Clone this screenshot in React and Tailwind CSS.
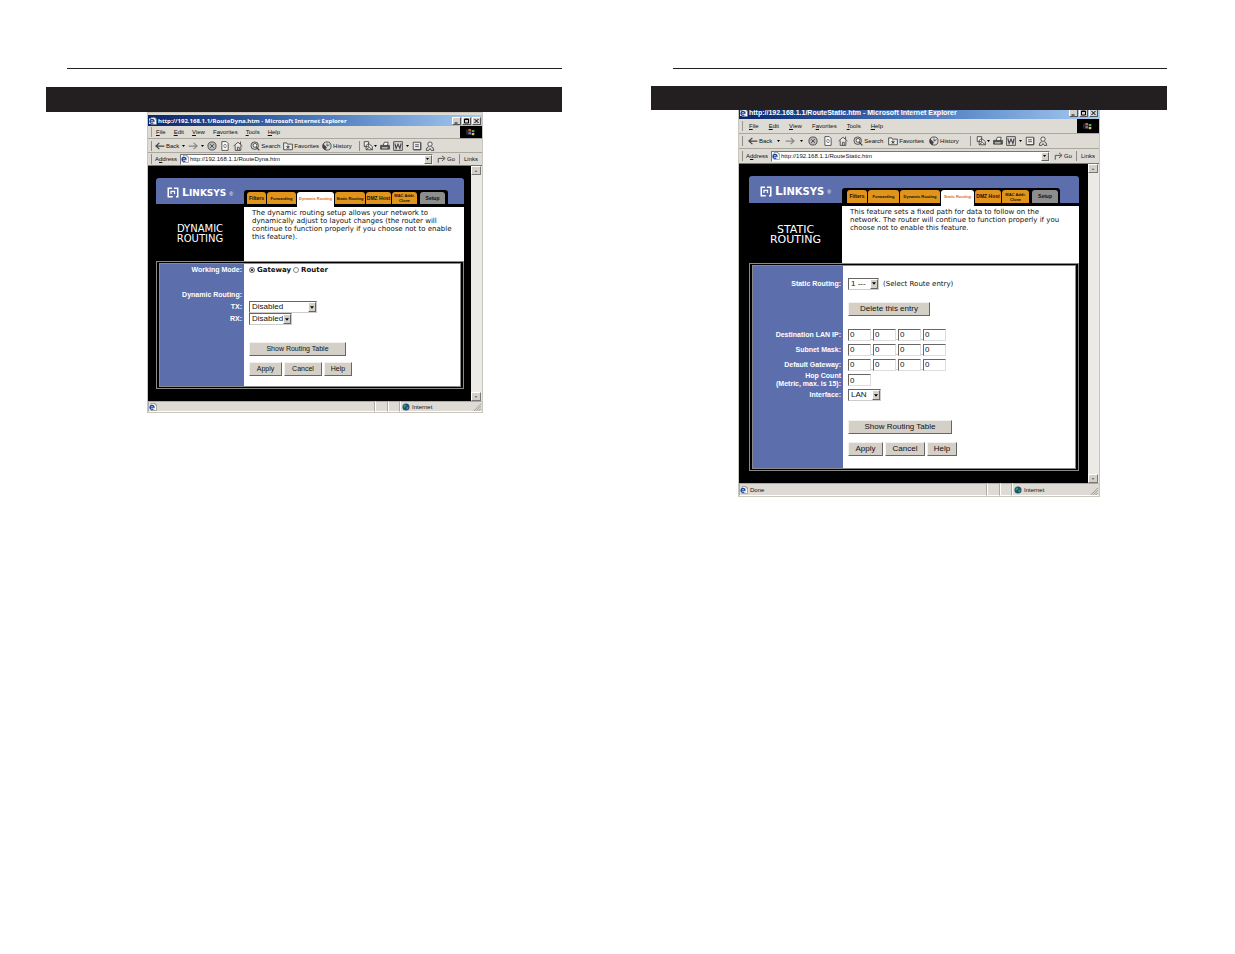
import React from 'react';
import clsx from 'clsx';

// small document icon with the blue "e"
const PageIcon = ({ className }) => (
  <svg viewBox="0 0 16 16" className={clsx('shrink-0', className)} aria-hidden="true">
    <path d="M4 1h8l3 3v11H4z" fill="#fff" stroke="#666" />
    <path d="M12 1v3h3" fill="none" stroke="#666" />
    <rect x="0" y="3" width="12" height="11" fill="#dfe8f8" />
    <path d="M2 8.500h8a4 4 0 1 0-1.500 3.200" fill="none" stroke="#1c3f94" strokeWidth="2.400" />
  </svg>
);

const WindowsLogo = () => (
  <svg viewBox="0 0 14 12" className="h-2 w-[10px]" aria-hidden="true">
    <path d="M3 2q2-1.500 4 0v3.500q-2-1.200-4 0z" fill="#d8603c" />
    <path d="M8 2.500q2 1 4 0V6q-2 1-4 0z" fill="#6f9a5b" />
    <path d="M3 6.500q2-1.200 4 0V10q-2-1.200-4 0z" fill="#5b83c4" />
    <path d="M8 7q2 1 4 0v3.500q-2 1-4 0z" fill="#d9c06a" />
    <path d="M0 3h2M0 5h2M0 7h2M0 9h2" stroke="#8a6a6a" strokeWidth="1" />
  </svg>
);

const Icon = ({ children, className }) => (
  <svg
    viewBox="0 0 16 16"
    className={clsx('h-[10px] w-[10px] shrink-0', className)}
    fill="none"
    stroke="#444"
    strokeWidth="1.400"
    aria-hidden="true"
  >
    {children}
  </svg>
);

const Caret = () => (
  <svg viewBox="0 0 6 4" className="h-[2px] w-[3px] shrink-0" aria-hidden="true">
    <path d="M0 0h6L3 4z" fill="#000" />
  </svg>
);

const ToolButton = ({ label, text, children }) => (
  <button type="button" aria-label={label} className="flex items-center gap-px">
    {children}
    {text && <span>{text}</span>}
  </button>
);

const Divider = () => <span className="h-[10px] w-px shrink-0 bg-[#8c8a86]" />;

const TitleBar = ({ title, large }) => (
  <div
    className={clsx(
      'flex items-center gap-px bg-linear-to-r from-[#0a246a] via-[#4a78bd] to-[#a6caf0] px-px',
      large ? 'h-3' : 'h-[11px]'
    )}
  >
    <PageIcon className="h-2 w-2" />
    <h2
      className={clsx(
        'flex-1 truncate leading-[8px] font-bold text-white',
        large ? 'text-[7px]' : 'font-["Noto_Sans",sans-serif] text-[6px]'
      )}
    >
      {title}
    </h2>
    {['Minimize', 'Maximize', 'Close'].map((name) => (
      <button
        key={name}
        type="button"
        aria-label={name}
        className="h-2 w-[9px] border border-t-white border-r-[#555] border-b-[#555] border-l-white bg-[#d4d0c8]"
      >
        <svg viewBox="0 0 14 12" className="h-full w-full" fill="none" stroke="#000" strokeWidth="2">
          {name === 'Minimize' && <path d="M3 10h6" />}
          {name === 'Maximize' && <path d="M3 2h8v8H3zM3 3h8" />}
          {name === 'Close' && <path d="M3 2l8 8M11 2l-8 8" />}
        </svg>
      </button>
    ))}
  </div>
);

const MenuBar = ({ large }) => (
  <div className={clsx('flex items-stretch border-b border-[#aaa79f]', large ? 'h-[15px]' : 'h-[13px]')}>
    <div className={clsx('flex flex-1 items-center pl-[3px]', large ? 'gap-[10px]' : 'gap-2')}>
      <span className="-mr-1 h-[10px] w-px bg-[#999]" />
      {[
        ['', 'F', 'ile'],
        ['', 'E', 'dit'],
        ['', 'V', 'iew'],
        ['F', 'a', 'vorites'],
        ['', 'T', 'ools'],
        ['', 'H', 'elp'],
      ].map(([before, key, after]) => (
        <button key={after} type="button">
          {before}
          <u>{key}</u>
          {after}
        </button>
      ))}
    </div>
    <div className="flex w-[22px] items-center justify-center bg-black">
      <WindowsLogo />
    </div>
  </div>
);

const ToolBar = ({ large }) => (
  <div
    className={clsx(
      'flex items-center border-b border-[#aaa79f] pl-[3px]',
      large ? 'h-[15px] gap-[5px]' : 'h-[14px] gap-[3px]'
    )}
  >
    <Divider />
    <ToolButton text="Back">
      <Icon className="w-2">
        <path d="M15 8H2M7 3L1.500 8 7 13" strokeWidth="2" />
      </Icon>
    </ToolButton>
    <Caret />
    <ToolButton label="Forward">
      <Icon className="w-2">
        <path d="M1 8h13M9 3l5.500 5L9 13" stroke="#888" strokeWidth="2" />
      </Icon>
    </ToolButton>
    <Caret />
    <ToolButton label="Stop">
      <Icon>
        <circle cx="8" cy="8" r="6.500" fill="#bbb" />
        <path d="M5 5l6 6M11 5l-6 6" />
      </Icon>
    </ToolButton>
    <ToolButton label="Refresh">
      <Icon>
        <path d="M3 1h7l3 3v11H3z" fill="#fff" />
        <path d="M5.500 7q2-3 5 0M10.500 9q-2 3-5 0" />
      </Icon>
    </ToolButton>
    <ToolButton label="Home">
      <Icon>
        <path d="M1 8l7-6 7 6M3.500 7v8h9V7" fill="#eee" />
        <path d="M7 15v-5h3v5M12 5V1" />
      </Icon>
    </ToolButton>
    {!large && <span className="w-px" />}
    <ToolButton text="Search">
      <Icon>
        <circle cx="7.500" cy="7.500" r="6" fill="#ccc" />
        <circle cx="8" cy="7" r="3" fill="#fff" />
        <path d="M10 10l5 5" strokeWidth="2" />
      </Icon>
    </ToolButton>
    <ToolButton text="Favorites">
      <Icon>
        <path d="M1 3h5l1 2h8v9H1z" fill="#eee" />
        <path d="M8 6l1 2.500h3L9.500 10l1 3L8 11l-2.500 2 1-3L4 8.500h3z" fill="#555" stroke="none" />
      </Icon>
    </ToolButton>
    <ToolButton text="History">
      <Icon>
        <circle cx="8" cy="8" r="6.500" fill="#ddd" />
        <path d="M8 4v4l4-2" />
        <path d="M2 5a7 7 0 0 0 3 9l2-4z" fill="#444" />
      </Icon>
    </ToolButton>
    <span className="w-px" />
    <Divider />
    <div className="flex items-center gap-[3px]">
      <ToolButton label="Mail">
        <Icon>
          <path d="M2 1h7v8H2zM5 7l4-3 6 5v5H5z" fill="#eee" />
          <path d="M5 14l5-4 5 4" />
        </Icon>
        <Caret />
      </ToolButton>
      <ToolButton label="Print">
        <Icon>
          <path d="M5 7l2-5h6l-1 5" fill="#fff" />
          <path d="M1 7h14v6H1z" fill="#555" />
          <path d="M3 11h9" stroke="#fff" />
        </Icon>
      </ToolButton>
      <ToolButton label="Edit with Word">
        <Icon>
          <path d="M1 1h14v14H1z" fill="#ddd" />
          <path d="M3 4l2 8 3-7 3 7 2-8" strokeWidth="1.800" />
        </Icon>
      </ToolButton>
      <Caret />
      <ToolButton label="Discuss">
        <Icon>
          <path d="M2 2h12v12H2z" fill="#eee" />
          <path d="M5 6h6M5 9h6M14 3v11H3" />
        </Icon>
      </ToolButton>
      <ToolButton label="Messenger">
        <Icon>
          <circle cx="8" cy="5" r="3.500" fill="#eee" />
          <path d="M2 15q0-5 4-6M14 15q0-5-4-6M2 15h4l2-3 2 3h4" />
        </Icon>
      </ToolButton>
    </div>
  </div>
);

const AddressBar = ({ id, url, large }) => (
  <div className={clsx('flex items-center gap-1 pr-1 pl-[3px]', large ? 'h-[14px]' : 'h-3')}>
    <Divider />
    <label htmlFor={`${id}-address`} className="-mx-px">
      A<u>d</u>dress
    </label>
    <div className="flex h-[11px] flex-1 items-center gap-px border border-t-[#777] border-r-[#eee] border-b-[#eee] border-l-[#777] bg-white">
      <PageIcon className="h-2 w-2" />
      <input id={`${id}-address`} defaultValue={url} className="w-0 flex-1 outline-none" />
      <button
        type="button"
        aria-label="Show addresses"
        className="flex h-[9px] w-2 items-center justify-center border border-t-white border-r-[#666] border-b-[#666] border-l-white bg-[#d4d0c8]"
      >
        <Caret />
      </button>
    </div>
    <button type="button" className="flex items-center">
      <Icon className="w-2">
        <path d="M2 14V7h9M8 3l5 4-5 4" />
      </Icon>
      Go
    </button>
    <Divider />
    <button type="button">Links</button>
  </div>
);

const ScrollBar = () => (
  <div className="flex w-[11px] shrink-0 flex-col justify-between bg-[#eceae6]">
    {['up', 'down'].map((dir) => (
      <button
        key={dir}
        type="button"
        aria-label={`Scroll ${dir}`}
        className="flex h-[9px] w-[10px] items-center justify-center border border-t-white border-r-[#777] border-b-[#777] border-l-white bg-[#d4d0c8]"
      >
        <svg viewBox="0 0 6 4" className="h-[2px] w-1">
          <path d={dir === 'up' ? 'M0 4h6L3 0z' : 'M0 0h6L3 4z'} fill="#777" />
        </svg>
      </button>
    ))}
  </div>
);

const StatusBar = ({ text, large }) => (
  <div className={clsx('flex items-stretch', large ? 'h-[13px]' : 'h-[11px]')}>
    <div className="flex flex-1 items-center gap-[2px] border border-t-[#aaa] border-r-[#aaa] border-b-white border-l-[#aaa]">
      <PageIcon className="h-2 w-2" />
      {text}
    </div>
    <span className="w-[13px] border border-t-[#aaa] border-r-[#aaa] border-b-white border-l-white" />
    <span className="w-3 border border-t-[#aaa] border-r-[#aaa] border-b-white border-l-white" />
    <div
      className={clsx(
        'flex items-center gap-[2px] border border-t-[#aaa] border-r-transparent border-b-white border-l-white pl-px',
        large ? 'w-[87px]' : 'w-[82px]'
      )}
    >
      <svg viewBox="0 0 16 16" className="h-2 w-2" aria-hidden="true">
        <circle cx="8" cy="8" r="7" fill="#1d4f7c" />
        <path d="M4 3l5 1-2 4-4 1zM9 8l4-1-1 5-3 1z" fill="#3c9a5a" />
      </svg>
      <span className="flex-1">Internet</span>
      <svg viewBox="0 0 10 10" className="h-2 w-2 self-end" stroke="#8a8a8a" aria-hidden="true">
        <path d="M1 10l9-9M4 10l6-6M7 10l3-3" />
      </svg>
    </div>
  </div>
);

const Logo = ({ large }) => (
  <div
    className={clsx(
      'flex shrink-0 items-center gap-[3px] pt-[3px] pl-[11px] text-white',
      large ? 'w-[93px]' : 'w-[88px]'
    )}
  >
    <svg viewBox="0 0 24 22" className="h-[11px] w-3 shrink-0" fill="none" stroke="#fff" aria-hidden="true">
      <path d="M10 2.500H2.500v17h9" strokeWidth="3" />
      <path d="M14 2.500h7.500v17H18" strokeWidth="3" />
      <path d="M8 14V8.500h7V14" strokeWidth="2.500" />
    </svg>
    <span
      className={clsx(
        'font-["DejaVu_Sans",sans-serif] leading-[12px] font-bold',
        large ? 'text-[10px]' : 'text-[9px]'
      )}
    >
      <span className={large ? 'text-[12px]' : 'text-[11px]'}>L</span>INKSYS
    </span>
    <span className="self-start pt-1 text-[5px] leading-[6px]">®</span>
  </div>
);

const tabs = [
  { name: 'Filters', width: 'w-[19px]', wide: 'w-5' },
  { name: 'Forwarding', width: 'w-[29px]', wide: 'w-[31px]' },
  { name: 'Dynamic Routing', width: 'w-[37px]', wide: 'w-10' },
  { name: 'Static Routing', width: 'w-[30px]', wide: 'w-[33px]' },
  { name: 'DMZ Host', width: 'w-[25px]', wide: 'w-[26px]' },
  { name: 'MAC Addr. Clone', width: 'w-[25px]', wide: 'w-[27px]' },
  { name: 'Setup', width: 'w-[25px]', wide: 'w-[26px]' },
];

const Tabs = ({ active, large }) => (
  <nav
    className={clsx(
      '-mb-[3px] flex items-stretch gap-px self-end rounded-t-[3px] bg-black pt-[2px]',
      large ? 'pr-[2px] pl-[5px]' : 'pr-[3px] pl-[3px]'
    )}
  >
    {tabs.map(({ name, width, wide }) => (
      <a
        key={name}
        href="#"
        className={clsx(
          'flex items-center justify-center rounded-t-[3px] text-center leading-[5px] font-bold',
          ['Filters', 'DMZ Host', 'Setup'].includes(name) ? 'text-[5px]' : 'text-[4px]',
          large ? wide : width,
          large ? 'h-4' : 'h-[15px]',
          name === 'Setup' && 'ml-[2px]',
          name === active && 'bg-white pb-[3px] text-[#e8641c]',
          name !== active && 'border-b-[3px] border-black',
          name !== active && (name === 'Setup' ? 'bg-[#8d8d8d]' : 'bg-[#e0941c]')
        )}
      >
        {name}
      </a>
    ))}
  </nav>
);

const Row = ({ label, htmlFor, className, children, large }) => (
  <div className={clsx('flex', className)}>
    <label
      htmlFor={htmlFor}
      className={clsx(
        'flex shrink-0 items-center justify-end bg-[#5c6eac] pr-[2px] text-right text-[7px] leading-[8px] font-bold whitespace-pre-line text-white',
        large ? 'w-[90px]' : 'w-[84px]'
      )}
    >
      {label}
    </label>
    <div className='flex items-center gap-[2px] pl-[5px] font-["DejaVu_Sans",sans-serif]'>{children}</div>
  </div>
);

const Select = ({ id, value, className }) => (
  <div className={clsx('relative', className)}>
    <select
      id={id}
      defaultValue={value}
      className='block h-3 w-full appearance-none border border-t-[#666] border-r-[#ccc] border-b-[#ccc] border-l-[#666] bg-white pl-[2px] font-["Liberation_Sans",sans-serif] text-[8px] leading-[10px] outline-none'
    >
      <option>{value}</option>
    </select>
    <span className="pointer-events-none absolute top-px right-px flex h-[10px] w-2 items-center justify-center border border-t-white border-r-[#666] border-b-[#666] border-l-white bg-[#d4d0c8]">
      <svg viewBox="0 0 6 4" className="h-[3px] w-1">
        <path d="M0 0h6L3 4z" />
      </svg>
    </span>
  </div>
);

const PushButton = ({ className, large, children }) => (
  <button
    type="button"
    className={clsx(
      'h-[14px] border border-t-[#f4f2ee] border-r-[#666] border-b-[#666] border-l-[#f4f2ee] bg-[#d4d0c8] font-["Liberation_Sans",sans-serif] leading-[12px]',
      large ? 'text-[8px]' : 'text-[7px]',
      className
    )}
  >
    {children}
  </button>
);

const NumberField = (props) => (
  <input
    defaultValue="0"
    className='h-3 w-[23px] border border-t-[#666] border-r-[#ddd] border-b-[#ddd] border-l-[#666] bg-white pl-px font-["Liberation_Sans",sans-serif] text-[8px] leading-[10px]'
    {...props}
  />
);

const OctetFields = ({ id, label }) => (
  <div className="flex">
    {[1, 2, 3, 4].map((n) => (
      <div key={n} className="flex items-end">
        <NumberField id={n === 1 ? id : undefined} aria-label={`${label} ${n}`} />
        <span className="w-[2px] leading-[6px]">{n < 4 && '.'}</span>
      </div>
    ))}
  </div>
);

const FormButtons = ({ large }) => (
  <>
    <PushButton large={large} className={large ? 'w-[35px]' : 'w-[33px]'}>
      Apply
    </PushButton>
    <PushButton large={large} className={large ? 'w-10' : 'w-[38px]'}>
      Cancel
    </PushButton>
    <PushButton large={large} className={large ? 'w-[30px]' : 'w-7'}>
      Help
    </PushButton>
  </>
);

const DynamicForm = () => (
  <>
    <Row label="Working Mode:" className="h-3">
      {['Gateway', 'Router'].map((mode) => (
        <label key={mode} className="flex items-center gap-[2px] text-[7px] leading-[8px] font-bold">
          <input
            type="radio"
            name="mode"
            defaultChecked={mode === 'Gateway'}
            className="h-[6px] w-[6px] appearance-none rounded-full border border-[#888] bg-white checked:bg-black checked:ring-1 checked:ring-white checked:ring-inset"
          />
          {mode}
        </label>
      ))}
    </Row>
    <Row className="h-[13px]" />
    <Row label="Dynamic Routing:" className="h-3" />
    <Row label="TX:" htmlFor="tx" className="h-3">
      <Select id="tx" value="Disabled" className="w-[68px]" />
    </Row>
    <Row label="RX:" htmlFor="rx" className="h-3">
      <Select id="rx" value="Disabled" className="w-[43px]" />
    </Row>
    <Row className="h-[17px]" />
    <Row className="h-[14px]">
      <PushButton className="w-[97px]">Show Routing Table</PushButton>
    </Row>
    <Row className="h-[6px]" />
    <Row className="h-[14px]">
      <FormButtons />
    </Row>
    <Row className="h-[10px]" />
  </>
);

const StaticForm = () => (
  <>
    <Row large className="h-[11px]" />
    <Row large label="Static Routing:" htmlFor="route" className="h-[13px]">
      <Select id="route" value="1 ---" className="w-[31px]" />
      <span className="pl-[2px] text-[7px] leading-[8px]">(Select Route entry)</span>
    </Row>
    <Row large className="h-3" />
    <Row large className="h-[14px]">
      <PushButton large className="w-[82px]">
        Delete this entry
      </PushButton>
    </Row>
    <Row large className="h-[11px]" />
    <Row large label="Destination LAN IP:" htmlFor="lan-ip" className="h-[15px]">
      <OctetFields id="lan-ip" label="Destination LAN IP" />
    </Row>
    <Row large label="Subnet Mask:" htmlFor="mask" className="h-[15px]">
      <OctetFields id="mask" label="Subnet Mask" />
    </Row>
    <Row large label="Default Gateway:" htmlFor="gateway" className="h-[15px]">
      <OctetFields id="gateway" label="Default Gateway" />
    </Row>
    <Row large label={'Hop Count\n(Metric, max. is 15):'} htmlFor="hops" className="h-4">
      <NumberField id="hops" />
    </Row>
    <Row large label="Interface:" htmlFor="interface" className="h-[14px]">
      <Select id="interface" value="LAN" className="w-[33px]" />
    </Row>
    <Row large className="h-[18px]" />
    <Row large className="h-[14px]">
      <PushButton large className="w-[104px]">
        Show Routing Table
      </PushButton>
    </Row>
    <Row large className="h-2" />
    <Row large className="h-[14px]">
      <FormButtons large />
    </Row>
    <Row large className="h-3" />
  </>
);

const Browser = ({ id, file, status, heading, description, active, large, children }) => (
  <section
    className={clsx(
      'w-full border border-[#c9c6be] bg-[#dedbd4] font-["Liberation_Sans",sans-serif] text-[6px] leading-[8px] text-[#111]',
      large ? '-mt-1 ml-[87px] max-w-[362px]' : 'ml-[101px] max-w-[336px] pt-[2px]'
    )}
  >
    <TitleBar large={large} title={`http://192.168.1.1/${file} - Microsoft Internet Explorer`} />
    <MenuBar large={large} />
    <ToolBar large={large} />
    <AddressBar id={id} large={large} url={`http://192.168.1.1/${file}`} />

    <div className="flex border-t border-[#777]">
      <div
        className={clsx('min-w-0 flex-1 bg-black pt-3 pb-3', large ? 'pr-[9px] pl-[10px]' : 'pr-[7px] pl-2')}
      >
        <header
          className={clsx(
            'flex items-center rounded-t-[3px] border-b-[3px] border-black bg-[#5c6eac]',
            large ? 'h-[30px]' : 'h-[29px]'
          )}
        >
          <Logo large={large} />
          <Tabs active={active} large={large} />
        </header>
        <div className={clsx('flex', large ? 'h-[57px]' : 'h-[54px]')}>
          <h1
            className={clsx(
              'flex shrink-0 items-center justify-center text-center font-["DejaVu_Sans",sans-serif] leading-[10px] whitespace-pre-line text-white',
              large ? 'w-[93px] text-[11px]' : 'w-[88px] text-[10px]'
            )}
          >
            {heading}
          </h1>
          <p className='flex-1 bg-white pt-[2px] pl-2 font-["DejaVu_Sans",sans-serif] text-[7px] leading-[8px] whitespace-pre-line'>
            {description}
          </p>
        </div>
        <form className="border border-[#8a8a8a] px-[2px] py-px">
          <div className="border border-[#8a8a8a] bg-white">{children}</div>
        </form>
      </div>
      <ScrollBar />
    </div>
    <StatusBar text={status} large={large} />
  </section>
);

export default function App() {
  return (
    <main className="flex min-h-screen gap-[89px] bg-white pr-[68px] pl-[46px]">
      <article className="min-w-0 flex-1 pt-[68px]">
        <hr className="ml-[21px] border-[#231f20]" />
        <div className="mt-[18px] h-[25px] bg-[#231f20]" />
        <Browser
          id="dynamic"
          file="RouteDyna.htm"
          active="Dynamic Routing"
          heading={'DYNAMIC\nROUTING'}
          description={
            'The dynamic routing setup allows your network to\ndynamically adjust to layout changes (the router will\ncontinue to function properly if you choose not to enable\nthis feature).'
          }
        >
          <DynamicForm />
        </Browser>
      </article>
      <article className="min-w-0 flex-1 pt-[68px]">
        <hr className="ml-[22px] border-[#231f20]" />
        <div className="relative z-10 mt-[17px] h-6 bg-[#231f20]" />
        <Browser
          large
          id="static"
          file="RouteStatic.htm"
          status="Done"
          active="Static Routing"
          heading={'STATIC\nROUTING'}
          description={
            'This feature sets a fixed path for data to follow on the\nnetwork. The router will continue to function properly if you\nchoose not to enable this feature.'
          }
        >
          <StaticForm />
        </Browser>
      </article>
    </main>
  );
}
